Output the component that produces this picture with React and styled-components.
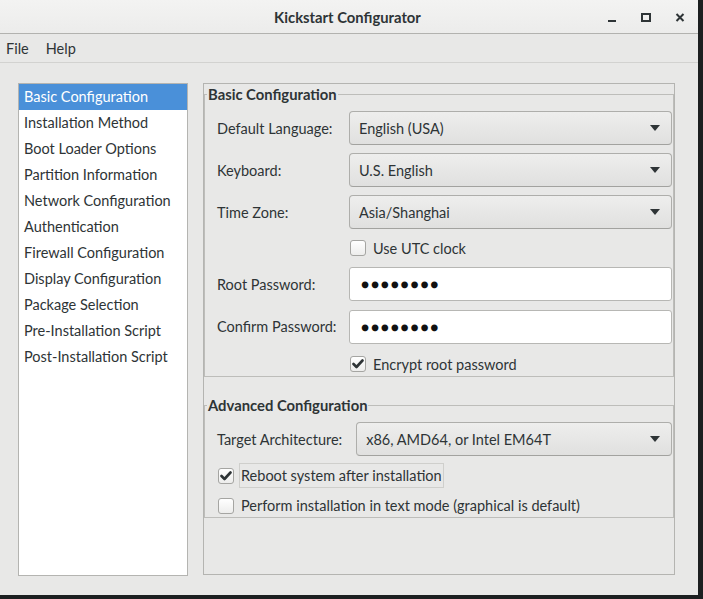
import React from 'react';
import styled, { createGlobalStyle } from 'styled-components';

const GlobalStyle = createGlobalStyle`
  html, body {
    margin: 0;
    padding: 0;
    background: #1c1f20;
  }
  body {
    font-family: Lato, "Liberation Sans", sans-serif;
    color: #2e3436;
  }
  * {
    box-sizing: border-box;
  }
`;

const sections = [
  'Basic Configuration',
  'Installation Method',
  'Boot Loader Options',
  'Partition Information',
  'Network Configuration',
  'Authentication',
  'Firewall Configuration',
  'Display Configuration',
  'Package Selection',
  'Pre-Installation Script',
  'Post-Installation Script',
];

function ArrowDown() {
  return (
    <svg width='10' height='6' viewBox='0 0 10 6'>
      <path d='M0 0 L10 0 L5 6 Z' fill='#2e3436' />
    </svg>
  );
}

function CheckMark() {
  return (
    <svg width='12' height='10' viewBox='0 0 12 10'>
      <path
        d='M1.5 5 L4.5 8 L10.5 1.5'
        fill='none'
        stroke='#2e3436'
        strokeWidth='2.6'
        strokeLinecap='round'
        strokeLinejoin='round'
      />
    </svg>
  );
}

function Combo({ value }) {
  return (
    <ComboBox>
      <span>{value}</span>
      <ArrowDown />
    </ComboBox>
  );
}

function Check({ checked, label, focused, h }) {
  return (
    <CheckRow h={h}>
      <CheckBox>{checked && <CheckMark />}</CheckBox>
      <CheckLabel focused={focused}>{label}</CheckLabel>
    </CheckRow>
  );
}

function App() {
  return (
    <>
      <GlobalStyle />
      <Window>
        <TitleBar>
          <span />
          <Title>Kickstart Configurator</Title>
          <WindowButtons>
            <WinButton>
              <svg width='10' height='10' viewBox='0 0 10 10'>
                <rect x='1' y='8' width='8' height='2' fill='#2e3436' />
              </svg>
            </WinButton>
            <WinButton>
              <svg width='10' height='10' viewBox='0 0 10 10'>
                <rect x='1' y='2' width='8' height='7' fill='none' stroke='#2e3436' strokeWidth='2' />
              </svg>
            </WinButton>
            <WinButton>
              <svg width='10' height='10' viewBox='0 0 10 10'>
                <path d='M1.5 2 L8.5 9 M8.5 2 L1.5 9' stroke='#2e3436' strokeWidth='2' />
              </svg>
            </WinButton>
          </WindowButtons>
        </TitleBar>
        <MenuBar>
          <MenuItem>File</MenuItem>
          <MenuItem>Help</MenuItem>
        </MenuBar>
        <Body>
          <SideList>
            {sections.map((s, i) => (
              <SideItem key={s} selected={i === 0}>
                {s}
              </SideItem>
            ))}
          </SideList>
          <Panel>
            <Frame>
              <Legend>Basic Configuration</Legend>
              <FormGrid>
                <FieldLabel>Default Language:</FieldLabel>
                <Combo value='English (USA)' />
                <FieldLabel>Keyboard:</FieldLabel>
                <Combo value='U.S. English' />
                <FieldLabel>Time Zone:</FieldLabel>
                <Combo value='Asia/Shanghai' />
                <span />
                <Check h={22} label='Use UTC clock' />
                <FieldLabel>Root Password:</FieldLabel>
                <Entry>●●●●●●●●</Entry>
                <FieldLabel>Confirm Password:</FieldLabel>
                <Entry second>●●●●●●●●</Entry>
                <span />
                <Check checked h={24} label='Encrypt root password' />
              </FormGrid>
            </Frame>
            <Frame advanced>
              <Legend>Advanced Configuration</Legend>
              <AdvancedBody>
                <ArchRow>
                  <FieldLabel>Target Architecture:</FieldLabel>
                  <Combo value='x86, AMD64, or Intel EM64T' />
                </ArchRow>
                <OptionList>
                  <Check checked focused h={25} label='Reboot system after installation' />
                  <Check h={23} label='Perform installation in text mode (graphical is default)' />
                </OptionList>
              </AdvancedBody>
            </Frame>
          </Panel>
        </Body>
      </Window>
    </>
  );
}

export default App;

const Window = styled.div`
  width: 698px;
  height: 595px;
  background-color: #e8e8e7;
  display: flex;
  flex-direction: column;
  font-size: 14.5px;
`;

const TitleBar = styled.div`
  height: 34px;
  display: grid;
  grid-template-columns: 1fr auto 1fr;
  align-items: center;
  background: linear-gradient(#f3f3f2, #ececeb);
  border-bottom: 1px solid #b2b2af;
`;

const Title = styled.div`
  font-weight: bold;
  font-size: 14.8px;
  padding-right: 3px;
`;

const WindowButtons = styled.div`
  justify-self: end;
  display: flex;
  padding-right: 1px;
`;

const WinButton = styled.div`
  width: 34px;
  height: 20px;
  display: flex;
  align-items: center;
  justify-content: center;
`;

const MenuBar = styled.div`
  height: 29px;
  display: flex;
  align-items: center;
  gap: 17px;
  padding-left: 6px;
  border-bottom: 1px solid #d2d2d0;
`;

const MenuItem = styled.div`
  font-size: 14.5px;
`;

const Body = styled.div`
  flex: 1;
  display: flex;
  align-items: flex-start;
  gap: 15px;
  padding: 20px 0 0 18px;
`;

const SideList = styled.div`
  width: 170px;
  height: 493px;
  background-color: #ffffff;
  border: 1px solid #b4b4b1;
  display: flex;
  flex-direction: column;
`;

const SideItem = styled.div`
  height: 26px;
  line-height: 26px;
  padding-left: 5px;
  white-space: nowrap;
  background-color: ${(p) => (p.selected ? '#4a90d9' : 'transparent')};
  color: ${(p) => (p.selected ? '#ffffff' : '#2e3436')};
`;

const Panel = styled.div`
  width: 472px;
  height: 492px;
  border: 1px solid #b4b4b1;
  padding-top: 2px;
`;

const Frame = styled.fieldset`
  margin: ${(p) => (p.advanced ? '20px' : '0')} 0 0 0;
  padding: 8px 1px 0 12px;
  border: 1px solid #bdbdba;
  min-width: 0;
`;

const Legend = styled.legend`
  font-weight: bold;
  font-size: 14.8px;
  line-height: 17px;
  padding: 0 1px;
  margin-left: -10px;
`;

const FormGrid = styled.div`
  display: grid;
  grid-template-columns: 132px 1fr;
  row-gap: 8px;
  align-items: center;
`;

const FieldLabel = styled.div`
  white-space: nowrap;
`;

const ComboBox = styled.div`
  height: 34px;
  display: flex;
  align-items: center;
  justify-content: space-between;
  padding: 0 11px 0 9px;
  border: 1px solid #aeaeab;
  border-bottom-color: #a2a29f;
  border-radius: 4px;
  background: linear-gradient(#eeeeed, #e0e0df);
  flex: 1;
`;

const Entry = styled.div`
  height: 34px;
  margin-top: ${(p) => (p.second ? '1px' : '0')};
  display: flex;
  align-items: center;
  padding-left: 11px;
  border: 1px solid #b7b7b4;
  border-radius: 3px;
  background-color: #ffffff;
  font-size: 13.5px;
  letter-spacing: 1.8px;
  color: #111111;
`;

const CheckRow = styled.div`
  display: flex;
  align-items: center;
  gap: 5px;
  height: ${(p) => p.h}px;
`;

const CheckBox = styled.div`
  width: 16px;
  height: 16px;
  border: 1px solid #a5a5a2;
  border-radius: 3px;
  background: linear-gradient(#ffffff, #ededec);
  display: flex;
  align-items: center;
  justify-content: center;
  margin-left: 1px;
`;

const CheckLabel = styled.div`
  height: 25px;
  line-height: 23px;
  padding: 0 1px;
  white-space: nowrap;
  border: 1px solid ${(p) => (p.focused ? '#cfcfcc' : 'transparent')};
`;

const AdvancedBody = styled.div`
  display: flex;
  flex-direction: column;
  gap: 7px;
`;

const ArchRow = styled.div`
  display: flex;
  align-items: center;
  gap: 14px;
`;

const OptionList = styled.div`
  display: flex;
  flex-direction: column;
  gap: 6px;
`;
